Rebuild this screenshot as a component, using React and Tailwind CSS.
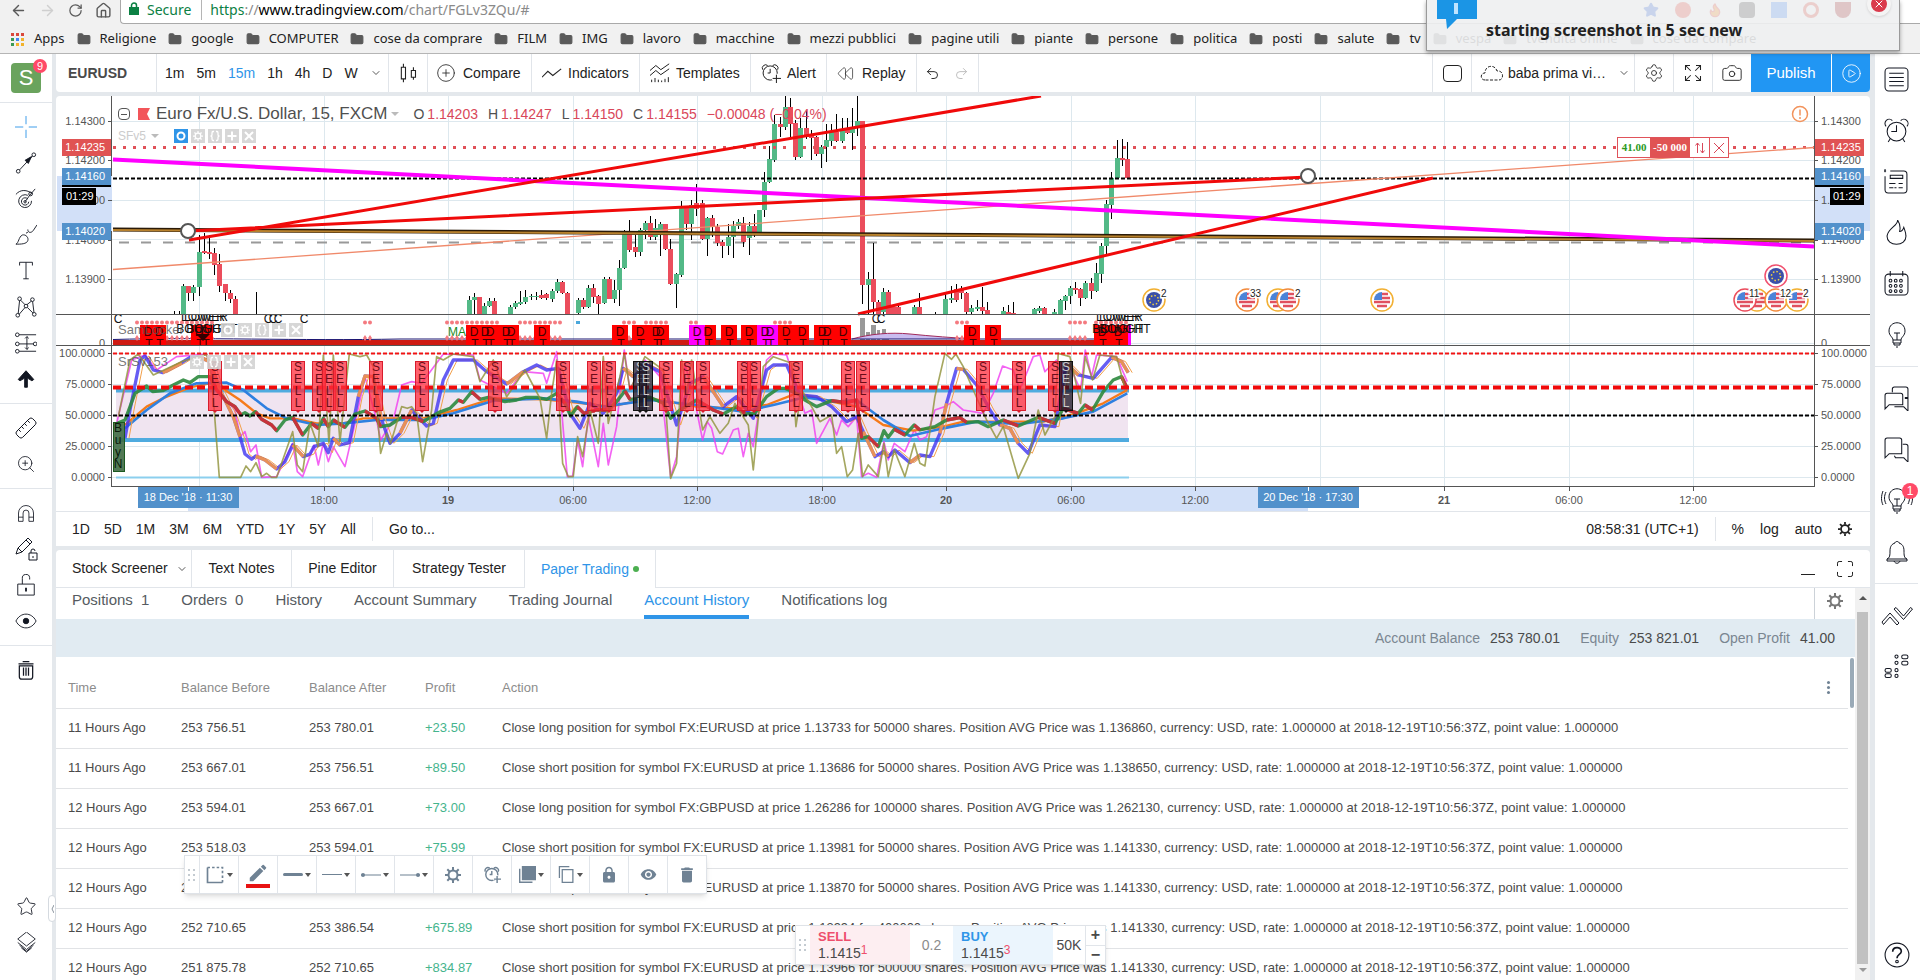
import {
  ArrowLeft,
  ArrowRight,
  Camera,
  ChevronDown,
  CirclePlay,
  CirclePlus,
  Flame,
  Folder,
  Home,
  Maximize,
  Redo2,
  Rewind,
  RotateCw,
  Ruler,
  Settings,
  Star,
  Undo2,
  X,
  ZoomIn,
} from "lucide-react";
import { MdDelete, MdEdit, MdLock, MdVisibility } from "react-icons/md";

const BOOKMARKS = [
  "Religione", "google", "COMPUTER", "cose da comprare", "FILM", "IMG", "lavoro", "macchine",
  "mezzi pubblici", "pagine utili", "piante", "persone", "politica", "posti", "salute", "tv",
  "vespa", "tvendita online", "cose da compare",
];

const INTERVALS = ["1m", "5m", "15m", "1h", "4h", "D", "W"];
const RANGES = ["1D", "5D", "1M", "3M", "6M", "YTD", "1Y", "5Y", "All"];

const PANEL_TABS = [
  { label: "Stock Screener", width: "w-[136px] pl-4", menu: true },
  { label: "Text Notes", width: "w-[100px] justify-center" },
  { label: "Pine Editor", width: "w-[102px] justify-center" },
  { label: "Strategy Tester", width: "w-[131px] justify-center" },
];

const ACCOUNT_TABS = [
  { label: "Positions", count: 1 },
  { label: "Orders", count: 0 },
  { label: "History" },
  { label: "Account Summary" },
  { label: "Trading Journal" },
  { label: "Account History", active: true },
  { label: "Notifications log" },
];

const deal = (side, symbol, price, shares, avg) =>
  `Close ${side} position for symbol FX:${symbol} at price ${price} for ${shares} shares. Position AVG Price was ${avg}, currency: USD, rate: 1.000000 at 2018-12-19T10:56:37Z, point value: 1.000000`;

const HISTORY = [
  ["11 Hours Ago", "253 756.51", "253 780.01", "+23.50", deal("long", "EURUSD", "1.13733", "50000", "1.136860")],
  ["11 Hours Ago", "253 667.01", "253 756.51", "+89.50", deal("short", "EURUSD", "1.13686", "50000", "1.138650")],
  ["12 Hours Ago", "253 594.01", "253 667.01", "+73.00", deal("long", "GBPUSD", "1.26286", "100000", "1.262130")],
  ["12 Hours Ago", "253 518.03", "253 594.01", "+75.99", deal("short", "EURUSD", "1.13981", "50000", "1.141330")],
  ["12 Hours Ago", "253 386.54", "253 518.03", "+131.49", deal("short", "EURUSD", "1.13870", "50000", "1.141330")],
  ["12 Hours Ago", "252 710.65", "253 386.54", "+675.89", deal("short", "EURUSD", "1.13994", "400000", "1.141330")],
  ["12 Hours Ago", "251 875.78", "252 710.65", "+834.87", deal("short", "EURUSD", "1.13966", "500000", "1.141330")],
];

/* ---------- chart data ---------- */

// direction, x, body top, body bottom, wick top, wick bottom
const CANDLES = [
  ["u", 183, 286, 314, 284, 314], ["d", 188, 286, 293, 286, 301], ["u", 193, 287, 293, 285, 301],
  ["u", 199, 252, 287, 235, 296], ["d", 204, 251, 253, 233, 254], ["d", 209, 252, 254, 235, 259],
  ["d", 214, 253, 265, 248, 275], ["d", 219, 264, 286, 254, 292], ["d", 225, 284, 293, 284, 301],
  ["d", 230, 293, 299, 290, 303], ["d", 235, 299, 314, 296, 314], ["u", 469, 300, 314, 296, 314],
  ["u", 474, 297, 300, 293, 314], ["d", 479, 297, 314, 297, 314], ["u", 484, 306, 314, 303, 314],
  ["u", 489, 301, 306, 298, 307], ["d", 494, 301, 314, 298, 314], ["u", 510, 307, 314, 305, 314],
  ["u", 515, 303, 307, 301, 309], ["u", 520, 302, 304, 291, 305], ["u", 525, 297, 302, 290, 304],
  ["u", 531, 296, 297, 294, 300], ["u", 536, 296, 297, 292, 300], ["d", 541, 295, 298, 290, 299],
  ["d", 546, 294, 298, 293, 300], ["u", 552, 291, 299, 289, 302], ["u", 557, 282, 291, 279, 293],
  ["d", 562, 282, 293, 281, 294], ["d", 567, 293, 314, 292, 314], ["u", 578, 300, 313, 298, 314],
  ["d", 583, 300, 307, 298, 309], ["u", 588, 288, 307, 285, 308], ["d", 593, 288, 297, 284, 303],
  ["d", 598, 296, 304, 295, 314], ["u", 604, 279, 303, 277, 304], ["d", 609, 279, 299, 277, 299],
  ["u", 614, 290, 299, 280, 303], ["u", 619, 268, 290, 260, 306], ["u", 624, 232, 268, 230, 269],
  ["d", 629, 232, 250, 220, 252], ["d", 635, 247, 252, 235, 257], ["u", 640, 230, 252, 228, 256],
  ["u", 645, 223, 230, 221, 239], ["d", 650, 223, 237, 216, 240], ["u", 655, 228, 237, 219, 240],
  ["u", 660, 224, 232, 222, 256], ["d", 665, 224, 249, 224, 250], ["d", 670, 249, 284, 239, 285],
  ["u", 676, 274, 284, 273, 308], ["u", 681, 207, 275, 201, 277], ["d", 686, 207, 224, 206, 230],
  ["u", 691, 205, 224, 200, 240], ["d", 696, 203, 209, 184, 216], ["d", 702, 203, 239, 200, 240],
  ["u", 707, 218, 239, 217, 256], ["d", 712, 218, 227, 215, 237], ["d", 717, 227, 243, 224, 246],
  ["d", 722, 242, 246, 240, 258], ["u", 728, 237, 246, 224, 255], ["u", 733, 226, 237, 221, 258],
  ["u", 738, 222, 226, 219, 229], ["d", 743, 223, 242, 217, 247], ["u", 749, 226, 238, 222, 255],
  ["d", 754, 226, 234, 214, 237], ["u", 759, 210, 234, 210, 235], ["u", 764, 182, 210, 172, 217],
  ["u", 769, 159, 182, 146, 183], ["u", 774, 124, 160, 115, 162], ["d", 780, 124, 127, 117, 137],
  ["u", 785, 107, 127, 96, 130], ["d", 790, 107, 124, 98, 137], ["d", 795, 123, 157, 120, 160],
  ["u", 800, 128, 157, 118, 158], ["d", 806, 128, 137, 110, 139], ["d", 811, 136, 138, 130, 160],
  ["d", 816, 137, 154, 136, 156], ["u", 821, 147, 154, 145, 168], ["u", 826, 140, 147, 124, 162],
  ["u", 831, 132, 141, 124, 146], ["d", 836, 132, 141, 114, 142], ["u", 842, 129, 141, 118, 143],
  ["d", 847, 129, 133, 118, 134], ["u", 852, 127, 133, 108, 150], ["u", 857, 121, 127, 96, 136],
  ["d", 862, 121, 285, 121, 304], ["u", 868, 279, 285, 272, 314], ["d", 873, 279, 302, 243, 314],
  ["d", 878, 302, 314, 300, 314], ["u", 883, 292, 312, 288, 314], ["d", 888, 292, 314, 290, 314],
  ["d", 893, 307, 314, 305, 314], ["d", 898, 307, 314, 305, 314], ["u", 914, 307, 314, 305, 314],
  ["d", 919, 307, 314, 293, 314], ["u", 945, 299, 314, 294, 314], ["u", 951, 298, 300, 286, 303],
  ["d", 956, 289, 300, 284, 302], ["d", 961, 289, 293, 286, 299], ["d", 966, 293, 312, 292, 314],
  ["u", 971, 308, 312, 305, 314], ["u", 977, 307, 309, 300, 311], ["d", 982, 307, 311, 287, 314],
  ["d", 987, 310, 314, 302, 314], ["u", 1003, 311, 314, 307, 314], ["d", 1008, 312, 314, 305, 314],
  ["d", 1013, 313, 314, 302, 314], ["u", 1034, 309, 314, 308, 314], ["u", 1039, 308, 311, 306, 313],
  ["d", 1044, 308, 314, 307, 314], ["u", 1054, 312, 314, 309, 314], ["u", 1060, 300, 314, 299, 314],
  ["u", 1065, 296, 301, 295, 310], ["u", 1070, 288, 296, 286, 304], ["d", 1075, 288, 290, 282, 294],
  ["d", 1080, 289, 298, 288, 306], ["u", 1085, 283, 298, 281, 299], ["d", 1091, 283, 291, 278, 299],
  ["u", 1096, 273, 291, 263, 292], ["u", 1101, 246, 274, 243, 283], ["u", 1106, 204, 246, 200, 256],
  ["u", 1111, 178, 205, 172, 219], ["u", 1117, 158, 178, 140, 178], ["d", 1122, 158, 160, 139, 166],
  ["d", 1127, 159, 178, 142, 179],
];

const GRID_X = [199, 324, 448, 573, 697, 822, 946, 1071, 1195, 1320, 1444, 1569, 1693];
const GRID_Y = [121, 160, 200, 239, 279, 343, 353, 384, 415, 446, 477];

const TIME_LABELS = [
  [324, "18:00"], [448, "19"], [573, "06:00"], [697, "12:00"], [822, "18:00"], [946, "20"],
  [1071, "06:00"], [1195, "12:00"], [1444, "21"], [1569, "06:00"], [1693, "12:00"],
];

const PRICE_LABELS = [
  [121, "1.14300"], [160, "1.14200"], [200, "1.14100"], [240, "1.14000"], [279, "1.13900"],
  [353, "100.0000"], [384, "75.0000"], [415, "50.0000"], [446, "25.0000"], [477, "0.0000"],
];

const SELLS = [215, 298, 319, 329, 340, 376, 422, 495, 563, 594, 609, 666, 687, 703, 744, 754, 796, 848, 863, 983, 1019, 1055];
const DARK_SELLS = [640, 646, 1066];

const D_BOXES = [
  [140, 26, "#f00"], [191, 22, "#f00"], [466, 53, "#f00"], [534, 16, "#f00"], [612, 16, "#f00"],
  [632, 37, "#f00"], [689, 16, "#f0f"], [705, 11, "#f00"], [721, 16, "#f00"], [741, 16, "#f00"],
  [757, 21, "#f0f"], [778, 31, "#f00"], [814, 37, "#f00"], [964, 16, "#f00"], [985, 16, "#f00"],
  [1094, 34, "#f00"], [1128, 3, "#f0f"],
];
const D_MARKS = [
  148, 159, 199, 205, 474, 485, 490, 506, 511, 542, 620, 640, 656, 660, 697, 708, 729, 749, 765, 770,
  786, 802, 822, 827, 843, 972, 993, 1102, 1118,
];
// runs of alert dots: first x, last x
const DOT_RUNS = [
  [137, 214], [365, 371], [447, 500], [520, 563], [624, 636], [646, 667], [691, 697], [775, 791], [957, 967], [1070, 1086], [1096, 1130],
];

// oscillator series, drawn on a grid of thirds of a pixel
const FAST =
  "22,340 45,330 75,250 110,228 128,245 158,242 190,225 220,210 240,218 265,200 300,200 320,240 350,275 375,290 393,315 405,308 420,318 437,305 455,328 485,345 500,362 525,330 548,322 578,375 605,340 625,355 640,325 655,350 670,330 705,352 735,312 765,303 800,325 812,350 840,345 875,322 905,322 940,335 985,308 1020,295 1045,270 1060,277 1085,245 1110,268 1135,262 1185,275 1220,270 1248,262 1280,262 1310,268 1340,250 1365,280 1382,318 1402,290 1422,310 1460,300 1495,300 1520,275 1545,243 1560,268 1620,262 1660,280 1682,325 1710,300 1760,270 1810,300 1840,312 1880,290 1905,312 1935,310 1970,260 2005,235 2025,235 2070,255 2085,270 2120,290 2165,272 2210,278 2240,270 2255,385 2275,380 2305,410 2322,362 2335,382 2353,358 2385,375 2413,345 2430,360 2475,350 2510,330 2550,323 2570,337 2605,335 2635,350 2680,330 2725,348 2785,322 2835,340 2860,295 2905,310 2925,285 2948,300 2980,245 3010,210 3035,200 3052,235";
const FAST_FALLS = [
  "300,200 320,240 350,275 375,290 393,315",
  "437,305 455,328 485,345 500,362",
  "548,322 578,375",
  "605,340 625,355",
  "640,325 655,350",
  "670,330 705,352",
  "765,303 800,325 812,350",
  "875,322 905,322 940,335",
  "1045,270 1060,277",
  "1085,245 1110,268",
  "1340,250 1365,280",
  "1402,290 1422,310 1460,300 1495,300",
  "1545,243 1560,268",
  "1760,270 1810,300 1840,312",
  "1880,290 1905,312",
  "2165,272 2210,278 2240,270 2255,385",
  "2275,380 2305,410",
  "2353,358 2385,375",
  "2413,345 2430,360",
  "2510,330 2550,323 2570,337",
  "2680,330 2725,348",
  "2785,322 2835,340",
  "2860,295 2905,310",
  "2925,285 2948,300",
  "3035,200 3052,235",
];
const WAVE =
  "45,385 60,300 90,150 105,138 130,180 158,188 215,158 240,142 265,140 300,155 330,240 370,320 390,380 405,432 425,448 437,438 465,450 500,477 525,455 548,405 580,440 600,432 612,410 640,400 655,428 670,385 690,405 718,398 745,260 765,198 790,200 815,330 840,400 870,370 905,300 950,348 970,340 1000,210 1030,150 1090,150 1130,185 1190,222 1240,185 1280,165 1310,180 1345,175 1380,310 1410,355 1440,280 1480,310 1520,250 1540,175 1570,200 1610,165 1650,185 1700,345 1740,220 1780,200 1840,290 1880,260 1930,325 1970,180 1990,165 2030,165 2070,255 2120,260 2165,290 2210,335 2240,320 2260,365 2295,440 2320,425 2335,440 2355,420 2400,458 2430,435 2460,440 2490,370 2510,280 2540,175 2560,178 2600,225 2640,300 2670,345 2700,355 2725,400 2755,430 2790,345 2835,350 2870,160 2905,195 2950,205 3005,142 3035,155 3055,188";
const WAVE_TURNS = [
  "158,188 215,158",
  "265,140 300,155 330,240 370,320 390,380",
  "437,438 465,450 500,477",
  "548,405 580,440",
  "670,385 690,405",
  "745,260 765,198 790,200 815,330",
  "870,370 905,300",
  "1190,222 1240,185",
  "1380,310 1402,290",
  "1540,175 1570,200",
  "1780,200 1840,290",
  "2260,365 2295,440",
  "2320,425 2335,440",
  "2400,458 2430,435",
  "2490,370 2510,280",
  "2540,175 2560,178",
  "2670,345 2700,355 2725,400",
  "2870,160 2905,195",
  "3005,142 3035,155 3055,188",
];
const OLIVE =
  "25,320 60,150 85,132 130,195 215,155 290,132 305,200 328,502 392,502 408,468 422,485 438,458 455,500 470,490 485,502 500,502 548,365 562,465 578,485 600,340 625,410 640,135 657,400 670,135 690,395 718,132 750,140 770,135 790,170 812,430 830,370 842,400 875,290 892,295 905,290 920,310 938,455 965,300 980,140 1000,150 1030,132 1090,140 1110,215 1150,150 1190,260 1245,180 1290,265 1310,385 1325,250 1340,150 1358,460 1375,500 1390,500 1403,380 1418,440 1440,300 1465,400 1480,140 1495,340 1530,200 1543,130 1560,240 1605,140 1660,180 1682,505 1700,460 1715,150 1730,250 1745,150 1778,360 1800,320 1830,370 1855,340 1875,280 1915,345 1930,480 1960,170 1990,140 2045,160 2058,350 2075,240 2105,290 2130,335 2165,315 2180,430 2195,410 2212,500 2228,480 2245,370 2258,500 2275,465 2305,500 2322,400 2335,500 2353,420 2385,500 2413,400 2430,460 2445,468 2475,260 2505,130 2525,148 2538,132 2560,170 2590,240 2630,330 2660,385 2680,350 2725,505 2760,430 2785,300 2805,375 2835,320 2845,130 2880,140 2912,280 2926,140 2948,210 2970,135 3020,140 3045,235";
const PINK =
  "20,340 65,150 105,135 140,180 200,140 290,132 320,240 375,300 390,380 405,365 422,425 438,405 455,502 500,500 548,400 562,485 578,500 612,405 625,465 640,400 655,455 670,410 705,470 735,340 765,200 800,330 812,390 850,330 875,225 905,215 935,220 1000,132 1090,135 1110,210 1190,250 1240,185 1300,190 1310,220 1340,125 1372,500 1388,498 1403,390 1418,470 1435,320 1465,470 1480,340 1495,465 1520,350 1543,120 1560,240 1605,150 1650,200 1682,500 1700,440 1725,160 1760,300 1778,390 1792,335 1805,355 1822,425 1838,432 1870,360 1885,355 1900,440 1915,370 1930,410 1970,150 1990,132 2030,135 2060,230 2085,310 2105,300 2120,400 2160,325 2180,375 2195,330 2215,350 2240,320 2255,500 2275,490 2300,502 2322,395 2335,450 2353,400 2385,425 2413,360 2430,390 2450,380 2475,300 2505,290 2530,275 2560,300 2620,310 2650,250 2678,168 2710,180 2730,240 2770,140 2790,135 2805,185 2840,150 2860,190 2880,170 2912,240 2926,120 2945,200 2960,135 3020,140 3052,215";
const SLOW_ORANGE =
  "45,345 110,290 165,262 240,232 300,220 330,230 390,270 440,310 480,325 550,325 620,340 700,340 760,325 850,325 940,325 1040,300 1150,265 1300,268 1400,278 1500,290 1620,265 1760,290 1880,295 1970,285 2060,250 2165,275 2240,290 2320,345 2410,362 2500,350 2560,335 2680,335 2800,335 2900,310 2980,280 3052,240";
const SLOW_BLUE =
  "45,355 110,300 180,250 260,220 350,218 400,240 470,295 530,325 620,345 700,340 800,330 940,330 1030,310 1150,272 1300,265 1400,275 1480,290 1620,270 1760,285 1900,305 1990,285 2085,262 2180,275 2240,270 2320,330 2400,378 2500,355 2600,335 2730,342 2860,325 2950,305 3052,250";

/* ---------- small drawings ---------- */

function Line({ size = 24, w = 1, children, className }) {
  return (
    <svg
      width={size}
      height={size}
      viewBox="0 0 24 24"
      fill="none"
      stroke="currentColor"
      strokeWidth={w}
      className={className}
      aria-hidden="true"
    >
      {children}
    </svg>
  );
}

function Gear({ size = 14, className }) {
  return (
    <svg width={size} height={size} viewBox="0 0 16 16" fill="none" stroke="currentColor" className={className} aria-hidden="true">
      <circle cx="8" cy="8" r="4.5" strokeWidth="2" />
      <path d="M8 0v3M8 13v3M0 8h3M13 8h3M2.3 2.3l2.2 2.2M11.5 11.5l2.2 2.2M2.3 13.7l2.2-2.2M11.5 4.5l2.2-2.2" strokeWidth="2" />
    </svg>
  );
}

function AlarmPlus({ size = 24, w = 1 }) {
  return (
    <Line size={size} w={w}>
      <circle cx="11" cy="12" r="8.5" />
      <path d="M11 7v5H8M2 8a4 4 0 0 1 6-5M14 3a4 4 0 0 1 6 5" />
      <path d="M18.500 13v11M13 18.500h11" stroke="#fff" strokeWidth="4" />
      <path d="M18.500 14v10M14 18.500h10" />
    </Line>
  );
}

const DRAW_TOOLS = [
  { label: "Cross", blue: true, art: <path d="M12 0v9M12 15v9M0 12h9M15 12h9" /> },
  { label: "Trend Line", art: <><circle cx="3.500" cy="21" r="2" /><circle cx="20.500" cy="3" r="2" /><path d="M5 19.500 19 4.500" /><path d="m18 5-7 4 3.500 3.500z" fill="currentColor" /></> },
  { label: "Gann and Fibonacci", art: <><path d="M14 8a7 7 0 1 0 4 6M14 12a4 4 0 1 0 1 3M1 7c5-6 12-5 18-1M11 15l5-7 6-7" /><circle cx="11" cy="15" r="1.300" /><circle cx="17" cy="6.500" r="2" /></> },
  { label: "Brush", art: <path d="M1 22c3-1 3-8 7-10 4-1 7 3 6 6-1 4-8 4-13 4zM14 6c0 4 4 4 6 1l4-6M12 10l2-1" /> },
  { label: "Text", art: <path d="M5 6V2.500h14V6M12 2.500v18M9 20.500h6" /> },
  { label: "Patterns", art: <><circle cx="5" cy="3" r="2" /><circle cx="3" cy="21" r="2" /><circle cx="12" cy="11" r="2" /><circle cx="19" cy="4" r="2" /><circle cx="21" cy="20" r="2" /><path d="M5 5 3.500 19M4.500 20 11 12.500M6 4.500l5 5M13 9.500l5-4M13.500 12.500l6 6M19.200 6l1.500 12" /></> },
  { label: "Prediction", art: <><circle cx="2.500" cy="3" r="2" /><circle cx="2.500" cy="13" r="2" /><circle cx="22" cy="13" r="2" /><circle cx="2.500" cy="21" r="2" /><path d="M4.500 3H23M4.500 13H20M4.500 21H23M13 5v14M11 7l2-2 2 2M11 17l2 2 2-2" /></> },
  { label: "Icon", art: <path d="M12 3 3.500 12.500l2 1.500L10.500 11v10h3V11l5 3 2-1.500z" fill="currentColor" /> },
];

function SideButton({ label, children, tall }) {
  return (
    <button
      aria-label={label}
      className={`relative flex w-full shrink-0 items-center justify-center text-[#131722] ${tall ? "h-[51px]" : "h-9"}`}
    >
      {children}
    </button>
  );
}

function Rule() {
  return <hr className="my-1.5 w-full shrink-0 border-t border-[#e1e5ea]" />;
}

/* ---------- browser chrome ---------- */

function BrowserBar() {
  return (
    <div className="relative h-[54px] shrink-0 overflow-hidden border-b border-[#b5b5b5] bg-[#f1f1f1] font-['Noto_Sans',sans-serif]">
      <div className="flex h-6 items-start">
        <div className="flex w-[120px] shrink-0 items-center gap-3 pl-2.5 text-[#5a5a5a]">
          <button aria-label="Back"><ArrowLeft size={17} className="mt-0.5" /></button>
          <button aria-label="Forward"><ArrowRight size={17} className="mt-0.5 text-[#cfcfcf]" /></button>
          <button aria-label="Reload"><RotateCw size={15} className="mt-0.5" /></button>
          <button aria-label="Home"><Home size={17} className="mt-0.5" /></button>
        </div>
        <div className="flex h-6 flex-1 items-start rounded-bl border-b border-l border-[#a9a9a9] bg-white pl-2 text-[14px] leading-5">
          <svg width="10" height="14" viewBox="0 0 10 14" className="mt-0.5" fill="#0b8043" aria-hidden="true">
            <path d="M0 5h10v8H0z" />
            <path d="M2.500 6V3.500a2.500 2.500 0 0 1 5 0V6" fill="none" stroke="#0b8043" strokeWidth="1.500" />
          </svg>
          <span className="ml-2 text-[#0b8043]">Secure</span>
          <span className="ml-2.5 mr-2 h-5 w-px bg-[#b5b5b5]" />
          <a href="#" className="text-[#8a8a8a]">
            <span className="text-[#0b8043]">https</span>://<span className="text-black">www.tradingview.com</span>/chart/FGLv3ZQu/#
          </a>
        </div>
      </div>
      <nav className="flex h-[30px] items-center whitespace-nowrap pl-[11px] text-[13px] text-[#222]">
        <a href="#" className="mr-3 flex items-center gap-2.5">
          <svg width="13" height="13" viewBox="0 0 13 13" aria-hidden="true">
            {["#d9483b", "#d9483b", "#d9483b", "#3a9a55", "#4285f4", "#f2b32c", "#3a9a55", "#f2b32c", "#f2b32c"].map((c, i) => (
              <rect key={i} x={(i % 3) * 5} y={Math.floor(i / 3) * 5} width="3" height="3" fill={c} />
            ))}
          </svg>
          Apps
        </a>
        {BOOKMARKS.map((name) => (
          <a key={name} href="#" className="mr-3 flex items-center gap-[9px]">
            <Folder size={14} fill="#5a5a5a" className="text-[#5a5a5a]" />
            {name}
          </a>
        ))}
      </nav>
    </div>
  );
}

function Notification() {
  return (
    <div
      role="status"
      className="absolute right-5 top-0 z-20 h-[51px] w-[474px] border border-t-0 border-[#9a9a9a] bg-[#eef0f1]/90 shadow-[0_2px_4px_rgba(0,0,0,0.35)]"
    >
      <svg width="40" height="30" viewBox="0 0 40 30" className="absolute left-2.5 top-0" aria-hidden="true">
        <path d="M0 0h40v19H20L10 29 9 19H0z" fill="#1b95e5" />
        <path d="M19 3v11" stroke="#bfe4ff" strokeWidth="4" />
      </svg>
      <div className="absolute right-12 top-0.5 flex gap-4 opacity-20">
        <Star size={16} fill="#3367d6" className="text-[#3367d6]" />
        <span className="h-4 w-4 rounded-full bg-[#e4483b]" />
        <Flame size={16} fill="#f28b1c" className="text-[#e4483b]" />
        <span className="h-4 w-4 rounded bg-[#444]" />
        <span className="h-4 w-4 bg-[#4285f4]" />
        <span className="h-4 w-4 rounded-full border-3 border-[#d9483b]" />
        <span className="h-4 w-4 rounded-b-full bg-[#a02020]" />
      </div>
      <button
        aria-label="Close"
        className="absolute -top-2 right-2 flex h-6 w-6 items-center justify-center rounded-full border-4 border-[#f4f4f4] bg-[#da3a4c] text-white shadow"
      >
        <X size={12} />
      </button>
      <p className="pl-[59px] pt-[18px] font-['Noto_Sans',sans-serif] text-[16px] font-bold leading-6 text-[#222]">
        starting screenshot in 5 sec new
      </p>
    </div>
  );
}

/* ---------- side toolbars ---------- */

function LeftToolbar() {
  return (
    <aside className="relative mr-1 flex w-[52px] shrink-0 flex-col items-center bg-white">
      <div className="flex h-[49px] w-full shrink-0 items-start justify-center border-b border-[#e1e5ea] pt-[9px]">
        <button className="relative h-[30px] w-[30px] rounded-sm bg-[#6aa35d] text-[22px] leading-[30px] text-white">
          S
          <span className="absolute -right-1.5 -top-1 flex h-3.5 w-3.5 items-center justify-center rounded-full bg-[#ff4a68] text-[11px] leading-none">9</span>
        </button>
      </div>
      <div className="h-1.5 shrink-0" />
      {DRAW_TOOLS.map((t) => (
        <SideButton key={t.label} label={t.label}>
          <Line size={22} className={t.blue ? "text-[#2f95e8]" : ""}>{t.art}</Line>
        </SideButton>
      ))}
      <Rule />
      <SideButton label="Measure"><Ruler size={24} strokeWidth={1} className="-scale-x-100" /></SideButton>
      <SideButton label="Zoom In"><ZoomIn size={20} strokeWidth={1} /></SideButton>
      <Rule />
      <SideButton label="Magnet Mode">
        <Line size={20}>
          <path d="M3 22V12a9 9 0 0 1 18 0v10h-5.500V12a3.500 3.500 0 0 0-7 0v10zM3 17h5.500M15.500 17H21" />
        </Line>
      </SideButton>
      <SideButton label="Stay in Drawing Mode">
        <Line size={24}>
          <path d="m2 17 2-6L14 1l4 4L8 15zM12 3l4 4M4 11l4 4M15 16h8v7h-8zM17 16v-2a2 2 0 0 1 4 0M19 19v2" />
        </Line>
      </SideButton>
      <SideButton label="Lock All Drawing Tools">
        <Line size={22}>
          <path d="M3 11h18v12H3zM8 11V5a4 4 0 0 1 8-1v2" />
          <path d="M12 15v4" strokeWidth="2" />
        </Line>
      </SideButton>
      <SideButton label="Hide All Drawings">
        <Line size={22}>
          <path d="M1 12c5-10 17-10 22 0-5 10-17 10-22 0z" />
          <circle cx="12" cy="12" r="3" fill="currentColor" />
        </Line>
      </SideButton>
      <Rule />
      <SideButton label="Remove Drawings">
        <Line size={20} w={1.500}>
          <path d="M3 4.500h18M8 2h8M4 7v13a3 3 0 0 0 3 3h10a3 3 0 0 0 3-3V7zM9 9v10M12 9v10M15 9v10" />
        </Line>
      </SideButton>
      <div className="flex-1" />
      <SideButton label="Favorites"><Star size={21} strokeWidth={1} /></SideButton>
      <SideButton label="Object Tree">
        <Line size={21}>
          <path d="m12 0 10 8-10 8L2 8zM2 12l10 8 10-8M4 15l8 7 8-7M6 18l6 5 6-5" />
        </Line>
      </SideButton>
      <div className="h-5 shrink-0" />
      <button
        aria-label="Collapse toolbar"
        className="absolute -right-1 bottom-[58px] flex h-[27px] w-2 items-center justify-center rounded border border-[#d5dae0] bg-white text-[#8a949e]"
      >
        <svg width="3" height="8" viewBox="0 0 3 8" fill="none" stroke="currentColor" aria-hidden="true"><path d="M3 0 1 4l2 4" /></svg>
      </button>
    </aside>
  );
}

function RightToolbar() {
  return (
    <aside className="ml-[5px] flex w-[45px] shrink-0 flex-col items-center bg-white pr-0.5">
      <SideButton tall label="Watchlist">
        <Line size={25}>
          <rect x="1" y="1" width="22" height="22" rx="3.500" />
          <path d="M5 6h14M5 10h14M5 14h14M5 18h14" />
        </Line>
      </SideButton>
      <SideButton tall label="Alerts">
        <Line size={25}>
          <circle cx="12" cy="13" r="9" />
          <path d="M12 7v6H7M2 8a4 4 0 0 1 6-5.500M16 2.500A4 4 0 0 1 22 8M6 20l-2 3M18 20l2 3" />
        </Line>
      </SideButton>
      <SideButton tall label="News">
        <Line size={25}>
          <path d="M1 7v13a3 3 0 0 0 3 3h15a3 3 0 0 0 3-3V5a3 3 0 0 0-3-3H6M1 0v3M-1 2h3M6 6h12v3H6zM5 14h6M5 18h4M14 14h4M14 18h4M10 18h2" />
        </Line>
      </SideButton>
      <SideButton tall label="Hotlist">
        <Line size={25}>
          <path d="M13 0c1 5-9 8-10 15-1 11 19 11 18 0 0-3-1-5-2-8-1 3-3 4-4 4 1-4 0-8-2-11z" />
        </Line>
      </SideButton>
      <SideButton tall label="Calendar">
        <Line size={25}>
          <rect x="1" y="3" width="22" height="20" rx="3.500" />
          <path d="M6 0v5M18 0v5" />
          {[8, 13, 18].map((y) => [5, 10, 15].map((x) => <rect key={`${x}${y}`} x={x} y={y} width="2.500" height="2.500" rx="1" />))}
        </Line>
      </SideButton>
      <SideButton tall label="My Ideas"><Bulb /></SideButton>
      <Rule />
      <SideButton tall label="Public Chats">
        <Line size={25}>
          <path d="M8 6V3a2 2 0 0 1 2-2h11a2 2 0 0 1 2 2v8h-3M1 22V9a2 2 0 0 1 2-2h13a2 2 0 0 1 2 2v9H5zM20 12h3v12l-4-4h-9" />
        </Line>
      </SideButton>
      <SideButton tall label="Private Chats">
        <Line size={25}>
          <path d="M1 20V3a2 2 0 0 1 2-2h12a2 2 0 0 1 2 2v13H5zM18 7h3a2 2 0 0 1 2 2v15l-4-4h-8l-1-2" />
        </Line>
      </SideButton>
      <SideButton tall label="Ideas Stream">
        <Bulb waves />
        <span className="absolute right-0 top-2 flex h-4 w-4 items-center justify-center rounded-full bg-[#ff4a68] text-[12px] text-white">1</span>
      </SideButton>
      <SideButton tall label="Notifications">
        <Line size={24}>
          <path d="M2 19c3-1 3-4 3-8 0-5 2-7 5-8 0-2 4-2 4 0 3 1 5 3 5 8 0 4 0 7 3 8zM2 19v2h20v-2M9 21c1 3 5 3 6 0" />
        </Line>
      </SideButton>
      <Rule />
      <SideButton tall label="Order Panel">
        <svg width="32" height="18" viewBox="0 0 32 18" fill="none" stroke="currentColor" aria-hidden="true">
          <path d="M1 15 9 6l9 10-2 2-7-8-6.500 7.500zM13 2l2-1.500L22.500 9 29.500.5l2 1.500-9 10.500z" />
        </svg>
      </SideButton>
      <SideButton tall label="DOM">
        <Line size={25}>
          {[1, 7].map((y) => <rect key={y} x="17" y={y} width="6" height="3.500" rx="1.700" />)}
          {[14, 19].map((y) => <rect key={y} x="1" y={y} width="6" height="3.500" rx="1.700" />)}
          {[2.500, 8.500, 15.500, 21].map((y) => <circle key={y} cx="12" cy={y} r="1.500" />)}
        </Line>
      </SideButton>
      <div className="flex-1" />
      <SideButton tall label="Help">
        <Line size={26}>
          <circle cx="12" cy="12" r="11" />
          <path d="M8 9c0-5 8-5 8-.5 0 3-4 3-4 6.500" strokeWidth="1.500" />
          <circle cx="12" cy="18" r="1.200" />
        </Line>
      </SideButton>
    </aside>
  );
}

function Bulb({ waves }) {
  return (
    <svg width="32" height="26" viewBox="-4 0 32 26" fill="none" stroke="currentColor" aria-hidden="true">
      <path d="M8 18c0-3-4-4-4-9 0-11 16-11 16 0 0 5-4 6-4 9zM9 11h6M12 11v7M8 21h8M9 21v2h6v-2M11 25h2M8 18v3M16 18v3" />
      {waves && <path d="M1 4c-2 4-2 8 0 12M-2 3c-2 5-2 10 0 14M23 4c2 4 2 8 0 12M26 3c2 5 2 10 0 14" />}
    </svg>
  );
}

/* ---------- chart header ---------- */

const cell = "flex h-full items-center border-r border-[#e1e5ea]";

function ChartHeader() {
  return (
    <header className="mb-1 flex h-[38px] shrink-0 items-center whitespace-nowrap rounded-b bg-white text-[14px] text-[#222]">
      <button className={`${cell} w-[101px] pl-3 font-bold text-[#4a4a4a]`}>EURUSD</button>
      <div className={`${cell} w-[232px] gap-3 pl-2`}>
        {INTERVALS.map((i) => (
          <button key={i} className={i === "15m" ? "text-[#2f95e8]" : ""}>{i}</button>
        ))}
        <button aria-label="More intervals"><ChevronDown size={12} strokeWidth={1.500} /></button>
      </div>
      <button aria-label="Bar style" className={`${cell} w-[39px] justify-center`}>
        <Line size={20} w={1.300}>
          <path d="M4 5h5v14H4zM6.500 1v4M6.500 19v4M16 9h5v8h-5zM18.500 5v4M18.500 17v3" />
        </Line>
      </button>
      <button className={`${cell} w-[104px] gap-[7px] pl-2`}><CirclePlus size={20} strokeWidth={1} />Compare</button>
      <button className={`${cell} w-[108px] gap-1.5 pl-2.5`}>
        <Line size={20} w={1.300}><path d="M0 17 7 10l6 5L23 7" /></Line>Indicators
      </button>
      <button className={`${cell} w-[111px] gap-1.5 pl-2.5`}>
        <Line size={20} w={1.200}>
          <path d="M0 9 7 3l6 5L23 1M0 15l7-6 6 5 10-7M2 23v-3M6 23v-5M10 23v-3M14 23v-2M18 23v-4M22 23v-6" />
        </Line>
        Templates
      </button>
      <button className={`${cell} w-[76px] gap-1.5 pl-2.5`}><AlarmPlus size={20} w={1.200} />Alert</button>
      <button className={`${cell} w-[90px] gap-2 pl-2.5`}><Rewind size={17} strokeWidth={1} />Replay</button>
      <div className={`${cell} w-[62px] gap-3.5 pl-2`}>
        <button aria-label="Undo"><Undo2 size={15} strokeWidth={1.500} /></button>
        <button aria-label="Redo" className="text-[#bbb]"><Redo2 size={15} strokeWidth={1.500} /></button>
      </div>
      <div className="h-full flex-1 border-r border-[#e1e5ea]" />
      <button aria-label="Layout" className={`${cell} w-[39px] justify-center`}>
        <span className="h-[17px] w-[19px] rounded-sm border border-[#222]" />
      </button>
      <button className={`${cell} w-[163px] pl-2`}>
        <Line size={24} w={1}><path d="M5 19c-5 0-5-7 0-7 0-8 10-9 12-2 7-1 7 9 2 9z" strokeDasharray="3 1.500" /></Line>
        <span className="ml-1 w-[110px] text-left">baba prima vi…</span>
        <ChevronDown size={12} strokeWidth={1.500} />
      </button>
      <button aria-label="Chart properties" className={`${cell} w-[39px] justify-center`}><Settings size={20} strokeWidth={1} /></button>
      <button aria-label="Fullscreen" className={`${cell} w-[39px] justify-center`}>
        <Line size={18} w={1.400}>
          <path d="M2 8V2h6M2 2l7 7M16 2h6v6M22 2l-7 7M2 16v6h6M2 22l7-7M22 16v6h-6M22 22l-7-7" />
        </Line>
      </button>
      <button aria-label="Take a snapshot" className="flex h-full w-[38px] items-center justify-center"><Camera size={22} strokeWidth={1} /></button>
      <button className="h-full w-20 bg-[#2196f3] text-[15px] text-white">Publish</button>
      <button aria-label="Start stream" className="flex h-full w-[39px] items-center justify-center rounded-br border-l border-white bg-[#2196f3] text-white">
        <CirclePlay size={21} strokeWidth={1} />
      </button>
    </header>
  );
}

/* ---------- chart ---------- */

function EventFlag({ x, y = 300, ring = "#f2b032", eu }) {
  return (
    <g>
      <circle cx={x} cy={y} r="11" fill="#fff" stroke={ring} strokeWidth="1.500" />
      {eu ? (
        <>
          <circle cx={x} cy={y} r="8" fill="#3b4fa8" />
          <circle cx={x} cy={y} r="4.500" fill="none" stroke="#f5d442" strokeWidth="1.500" strokeDasharray="1.500 2" />
        </>
      ) : (
        <>
          <circle cx={x} cy={y} r="8" fill="#fff" />
          <path d={`M${x} ${y - 6}h6M${x} ${y - 2}h8M${x - 8} ${y + 2}h16M${x - 5} ${y + 6}h10`} stroke="#e0505f" strokeWidth="2.500" />
          <path d={`M${x} ${y - 8}a8 8 0 0 0-8 8h8z`} fill="#4b83d8" />
        </>
      )}
    </g>
  );
}

function PriceTags({ side }) {
  const left = side === "left";
  const x = left ? 62 : 1815;
  const tx = left ? 105 : 1821;
  const anchor = left ? "end" : "start";
  return (
    <g fontSize="11" textAnchor={anchor}>
      <rect x={left ? 57 : 1815} y="176" width="55" height="55" fill="#d2e0f8" />
      {PRICE_LABELS.map(([y, t]) => (
        <g key={t}>
          <path d={left ? `M108 ${y + 0.5}h4` : `M1814 ${y + 0.5}h4`} stroke="#555" />
          <text x={tx} y={y + 4} fill="#555">{t}</text>
        </g>
      ))}
      <text x={tx} y="347" fill="#555" clipPath="url(#volumePane)">0</text>
      {[[139, "1.14235", "#e05353"], [168, "1.14160", "#5291cb"], [223, "1.14020", "#5291cb"]].map(([y, t, c]) => (
        <g key={t}>
          <rect x={x} y={y} width="49" height="17" fill={c} />
          <text x={tx} y={y + 12} fill="#fff">{t}</text>
        </g>
      ))}
      <rect x={x} y="185" width="49" height="2" fill="#000" />
      <rect x={left ? 62 : 1830} y="188" width="34" height="17" fill="#000" />
      <text x={left ? 66 : 1833} y="200" fill="#fff" textAnchor="start">01:29</text>
    </g>
  );
}

function PriceChart() {
  return (
    <svg viewBox="56 96 1814 415" className="block w-full rounded-t bg-white font-['Liberation_Sans',sans-serif]" role="img" aria-label="EURUSD chart">
      <defs>
        <clipPath id="volumePane"><rect x="56" y="315" width="1814" height="30" /></clipPath>
      </defs>

      <g stroke="#dde8ee">
        {GRID_X.map((x) => <path key={x} d={`M${x + 0.5} 96V486`} />)}
        {GRID_Y.map((y) => <path key={y} d={`M112 ${y + 0.5}H1814`} />)}
      </g>

      {/* price pane */}
      <path d="M119 242.500H1814" stroke="#999" strokeWidth="2" strokeDasharray="10 12" />
      <path d="M174.500 311v3M179.500 311v3M256.500 292v22M935.500 312v2" stroke="#000" />
      {CANDLES.map(([dir, x, top, bottom, high, low]) => (
        <g key={x}>
          <path d={`M${x + 0.5} ${high}V${low}`} stroke="#000" />
          <rect x={x - 2} y={top} width="5" height={bottom - top} fill={dir === "u" ? "#53b987" : "#eb4d5c"} />
        </g>
      ))}
      <path d="M113 147.500H1814" stroke="#e0525a" strokeWidth="3" strokeDasharray="3 7" />
      <path d="M113 178.500H1814" stroke="#000" strokeWidth="2" strokeDasharray="4 2" />
      <path d="M113 269.500 1814 147.500" stroke="#f0896a" strokeWidth="1.300" />
      <path d="M113 229.500 1814 240.500" stroke="#2a1a08" strokeWidth="4" />
      <path d="M113 230 1814 241" stroke="#b8822e" strokeWidth="2" />
      <path d="M113 159.500 1814 246.500" stroke="#f0f" strokeWidth="4" />
      <path d="M189 240 1041 96M188 231 1308 177M858 314 1433 178" stroke="#f00a0a" strokeWidth="3" fill="none" />
      <circle cx="188" cy="231" r="7" fill="#fff" stroke="#555" strokeWidth="2" />
      <circle cx="1308" cy="176" r="7" fill="#fff" stroke="#555" strokeWidth="2" />

      <EventFlag x={1154} eu />
      <EventFlag x={1247} ring="#f28b3c" />
      <EventFlag x={1278} />
      <EventFlag x={1288} ring="#f28b3c" />
      <EventFlag x={1382} />
      <EventFlag x={1757} />
      <EventFlag x={1745} ring="#eb4d5c" />
      <EventFlag x={1776} ring="#f28b3c" />
      <EventFlag x={1797} />
      <EventFlag x={1776} y={276} ring="#f0506e" eu />
      <g fontSize="10" fill="#222" stroke="#fff" strokeWidth="3" paintOrder="stroke">
        <text x="1161" y="297">2</text>
        <text x="1250" y="297">33</text>
        <text x="1295" y="297">2</text>
        <text x="1749" y="297">11</text>
        <text x="1780" y="297">12</text>
        <text x="1803" y="297">2</text>
      </g>
      <circle cx="1800" cy="114" r="7.500" fill="none" stroke="#f2935c" strokeWidth="1.500" />
      <path d="M1800 109.500v6M1800 117v2" stroke="#f2935c" strokeWidth="1.500" />

      {/* alerts pane */}
      <g clipPath="url(#volumePane)">
        {[[860, 318, 5], [866, 332, 4], [871, 325, 5], [877, 330, 3], [882, 329, 4], [886, 334, 3]].map(([x, y, w]) => (
          <rect key={x} x={x} y={y} width={w} height={345 - y} fill="#999" />
        ))}
        <path d="M852 339C870 334 890 332 910 334S955 338 975 339" fill="#c9bcf0" stroke="#a02a5a" />
        <path d="M113 339.500C200 337 300 341 400 339H1130" stroke="#1b1470" fill="none" />
        <rect x="113" y="340" width="1017" height="5" fill="#cf1a12" />
        {DOT_RUNS.flatMap(([from, to]) =>
          Array.from({ length: Math.floor((to - from) / 5) + 1 }, (_, i) => from + i * 5).map((x) => (
            <g key={x} fill="#f47a80">
              <circle cx={x} cy="322.500" r="2" />
              <path d={`M${x} 335l2 3-2 3-2-3z`} />
            </g>
          ))
        )}
        {D_BOXES.map(([x, w, c]) => <rect key={x} x={x} y="325" width={w} height="20" fill={c} />)}
        <g fontSize="12" fill="#111" textAnchor="middle">
          {D_MARKS.map((x) => (
            <g key={x} fill="#400">
              <text x={x} y="336">D</text>
              <text x={x + 1} y="348">T</text>
            </g>
          ))}
          <text x="118" y="323">C</text>
          <text x="268" y="323">C</text>
          <text x="273" y="323">C</text>
          <text x="278" y="323">C</text>
          <text x="304" y="323">C</text>
          <text x="876" y="323">C</text>
          <text x="881" y="323">C</text>
          <text x="457" y="336" fill="#1c8a1c">MA</text>
          <text x="203" y="321">LOWER</text>
          <text x="206" y="321">LOWER</text>
          <text x="202" y="333">BOUGHT</text>
          <text x="212" y="333">BOUGHT</text>
          <text x="1118" y="321">LOWER</text>
          <text x="1121" y="321">LOWER</text>
          <text x="1118" y="333">BOUGHT</text>
          <text x="1125" y="333">BOUGHT</text>
        </g>
        <path d="m196 334 14 0-7 7z" fill="#300" />
        <rect x="576" y="321" width="4" height="3" fill="#4aa8dc" />
      </g>

      {/* oscillator pane */}
      <rect x="116" y="390" width="1012" height="50" fill="#f0e4f0" />
      <path d="M116 390.500H1129M116 440H1129" stroke="#4fabdf" strokeWidth="4" />
      <path d="M116 477.500H1129" stroke="#8ccfee" strokeWidth="2" />
      <g transform="translate(110 310) scale(.3333)" fill="none" strokeLinejoin="round">
        <polyline points={PINK} stroke="#f03cf0" strokeWidth="5" opacity=".8" />
        <polyline points={SLOW_ORANGE} stroke="#f57a1a" strokeWidth="7" />
        <polyline points={SLOW_BLUE} stroke="#2f80e0" strokeWidth="8" />
        <polyline points={WAVE} stroke="#f2a04a" strokeWidth="3" transform="translate(12 0)" />
        <polyline points={WAVE} stroke="#4034f0" strokeWidth="10" opacity=".8" />
        {WAVE_TURNS.map((p) => <polyline key={p} points={p} stroke="#ff9a3c" strokeWidth="10" opacity=".85" />)}
        <polyline points={FAST} stroke="#2c8a3e" strokeWidth="10" opacity=".9" />
        {FAST_FALLS.map((p) => <polyline key={p} points={p} stroke="#d6283a" strokeWidth="10" opacity=".9" />)}
        <polyline points={OLIVE} stroke="#8f9138" strokeWidth="5" opacity=".8" />
      </g>
      <path d="M113 353.500H1814" stroke="#f01414" strokeWidth="2" strokeDasharray="4 2" />
      <path d="M113 387.500H1814" stroke="#f00a0a" strokeWidth="4" strokeDasharray="8 4" />
      <path d="M113 415.500H1814" stroke="#000" strokeWidth="2" strokeDasharray="4 2" />
      <g fontSize="12" textAnchor="middle">
        {[...SELLS.map((x) => [x, false]), ...DARK_SELLS.map((x) => [x, true])].map(([x, dark]) => (
          <g key={x}>
            <rect x={x - 6.5} y="361.500" width="13" height="49" fill={dark ? "#1b1424" : "#ff2c3c"} fillOpacity=".75" stroke={dark ? "#111" : "#d81c2c"} />
            <path d={`M${x - 2} 411h4l-2 2z`} fill={dark ? "#111" : "#d81c2c"} />
            {["S", "E", "L", "L"].map((c, i) => (
              <text key={i} x={x} y={371 + i * 12} fill={dark ? "#ccc" : "#6a0c18"}>{c}</text>
            ))}
          </g>
        ))}
        <rect x="113.500" y="422.500" width="11" height="49" fill="#3f6a42" fillOpacity=".9" stroke="#1c5a20" />
        {["B", "u", "y", "N"].map((c, i) => <text key={c} x="118" y={432 + i * 12} fill="#0a1a0a">{c}</text>)}
      </g>

      {/* frame and axes */}
      <path d="M56 314.500H1870M56 345.500H1870M112 486.500H1814M111.500 96V487M1814.500 96V487" stroke="#555" fill="none" />
      <PriceTags side="left" />
      <PriceTags side="right" />
      <rect x="188" y="487" width="1120" height="24" fill="#d2e0f8" />
      <g fontSize="11" textAnchor="middle" fill="#555">
        {TIME_LABELS.map(([x, t]) => (
          <g key={x}>
            <path d={`M${x + 0.5} 487v4`} stroke="#555" />
            <text x={x} y="504" fontWeight={t.length === 2 ? 700 : 400}>{t}</text>
          </g>
        ))}
        {[[138, "18 Dec '18 · 11:30"], [1258, "20 Dec '18 · 17:30"]].map(([x, t]) => (
          <g key={x}>
            <rect x={x} y="487" width="101" height="21" fill="#5291cb" />
            <path d={`M${x + 50.5} 487v4`} stroke="#fff" />
            <text x={x + 50} y="501" fill="#fff">{t}</text>
          </g>
        ))}
      </g>
    </svg>
  );
}

function LegendButtons({ count, on }) {
  const art = [
    <circle key="e" cx="7" cy="7" r="3.500" />,
    null,
    <path key="b" strokeWidth="1.300" d="M6 2.500H5Q4 2.500 4 4v1.500Q4 7 2.500 7 4 7 4 8.500V10q0 1.500 1 1.500h1M8 2.500h1q1 0 1 1.500v1.500Q10 7 11.500 7 10 7 10 8.500V10q0 1.500-1 1.500H8" />,
    <path key="p" d="M7 2.500v9M2.500 7h9" />,
    <path key="x" d="m3 3 8 8M11 3l-8 8" />,
  ].slice(5 - count);
  const labels = ["Hide", "Format", "Source", "Add", "Remove"].slice(5 - count);
  return (
    <span className="flex gap-[3px]">
      {art.map((a, i) => (
        <button key={i} aria-label={labels[i]} className={`h-3.5 w-3.5 text-white ${on && i === 0 ? "bg-[#2f95e8]" : "bg-[#d3d3d3]/90"}`}>
          {labels[i] === "Format" ? (
            <Gear size={10} className="m-0.5" />
          ) : (
            <svg width="14" height="14" viewBox="0 0 14 14" fill="none" stroke="currentColor" strokeWidth="2" aria-hidden="true">{a}</svg>
          )}
        </button>
      ))}
    </span>
  );
}

function ChartLegend() {
  const prices = [["O", "1.14203"], ["H", "1.14247"], ["L", "1.14150"], ["C", "1.14155"]];
  return (
    <>
      <div className="absolute left-[62px] top-2 flex items-center whitespace-nowrap text-[14px] leading-5">
        <button aria-label="Collapse legend" className="flex h-3 w-3 items-center justify-center rounded-sm border border-[#555]">
          <span className="h-px w-1.5 bg-[#555]" />
        </button>
        <svg width="12" height="12" viewBox="0 0 12 12" className="ml-2 mr-1.5" aria-hidden="true">
          <path d="M0 0h12L9 6l3 6H0z" fill="#f2555a" />
        </svg>
        <span className="text-[17px] text-[#4f4f4f]">Euro Fx/U.S. Dollar, 15, FXCM</span>
        <span className="mx-1 border-x-4 border-t-4 border-x-transparent border-t-[#bbb]" />
        <span className="ml-2.5 flex gap-2.5">
          {prices.map(([k, v]) => (
            <span key={k} className="flex gap-[3px]">
              <span className="text-[#4f4f4f]">{k}</span>
              <span className="text-[#d9475a]">{v}</span>
            </span>
          ))}
          <span className="text-[#d9475a]">−0.00048 (−0.04%)</span>
        </span>
      </div>
      <div className="absolute left-[62px] top-[33px] flex h-3.5 items-center gap-[5px] text-[12px] text-[#ccc]">
        SFv5
        <span className="mr-2.5 border-x-4 border-t-4 border-x-transparent border-t-[#bbb]" />
        <LegendButtons count={5} on />
      </div>
      <div className="absolute left-[62px] top-[227px] flex h-3.5 items-center text-[13px] text-[#555]/80">
        <span className="w-[103px]">SamLocker</span>
        <LegendButtons count={5} />
      </div>
      <div className="absolute left-[62px] top-[259px] flex h-3.5 items-center text-[13px] text-[#555]/80">
        <span className="w-[72px]">SrSv153</span>
        <LegendButtons count={4} />
      </div>
      <div className="absolute right-[141px] top-[41px] flex h-[21px] border border-[#e0525a] bg-white font-['Liberation_Serif',serif] text-[11px] font-bold leading-[19px]">
        <span className="w-8 text-center text-[#2a9a1e]">41.00</span>
        <span className="w-10 bg-[#e05353] text-center text-white">-50 000</span>
        <button aria-label="Reverse position" className="flex w-5 items-center justify-center border-r border-[#e0525a] text-[#d9475a]">
          <svg width="12" height="12" viewBox="0 0 12 12" fill="none" stroke="currentColor" aria-hidden="true">
            <path d="M3.500 11V1L1.500 3.500M3.500 1l2 2.500M8.500 1v10l-2-2.500M8.500 11l2-2.500" />
          </svg>
        </button>
        <button aria-label="Close position" className="flex w-[18px] items-center justify-center text-[#d9475a]">
          <svg width="10" height="10" viewBox="0 0 10 10" stroke="currentColor" aria-hidden="true"><path d="M0 0l10 10M10 0 0 10" /></svg>
        </button>
      </div>
    </>
  );
}

function RangeBar() {
  return (
    <div className="flex h-[35px] shrink-0 items-center border-t border-[#e1e5ea] bg-white text-[14px] text-[#222]">
      <div className="flex gap-3.5 pl-4">
        {RANGES.map((r) => <button key={r}>{r}</button>)}
      </div>
      <span className="mx-4 h-6 w-px bg-[#e1e5ea]" />
      <button>Go to...</button>
      <div className="flex-1" />
      <button>08:58:31 (UTC+1)</button>
      <span className="mx-4 h-6 w-px bg-[#e1e5ea]" />
      <div className="flex items-center gap-4 pr-[18px]">
        <button>%</button>
        <button>log</button>
        <button>auto</button>
        <button aria-label="Scale settings"><Gear size={14} /></button>
      </div>
    </div>
  );
}

/* ---------- account panel ---------- */

function PanelTabs() {
  return (
    <div className="flex h-[38px] shrink-0 items-stretch whitespace-nowrap text-[14px] text-[#222]" role="tablist">
      {PANEL_TABS.map((t) => (
        <button key={t.label} role="tab" className={`flex items-center gap-2 border-b border-r border-[#e1e5ea] ${t.width}`}>
          {t.label}
          {t.menu && <ChevronDown size={12} strokeWidth={1.500} />}
        </button>
      ))}
      <button role="tab" aria-selected="true" className="flex items-center gap-1 border-r border-[#e1e5ea] px-4 text-[#2f95e8]">
        Paper Trading
        <span className="h-1.5 w-1.5 rounded-full bg-[#4caf50]" />
      </button>
      <div className="flex flex-1 items-center justify-end gap-5 border-b border-[#e1e5ea] pr-[15px]">
        <button aria-label="Minimize" className="mt-3 h-px w-3.5 bg-[#222]" />
        <button aria-label="Maximize"><Maximize size={20} strokeWidth={1.200} /></button>
      </div>
    </div>
  );
}

function AccountPanel() {
  return (
    <section className="mt-1 flex min-h-0 flex-1 flex-col overflow-hidden rounded-t bg-white">
      <PanelTabs />
      <div className="flex min-h-0 flex-1">
        <div className="flex min-w-0 flex-1 flex-col">
          <div className="flex h-[31px] shrink-0 gap-8 pl-4 text-[15px] leading-[22px] text-[#555b61]">
            {ACCOUNT_TABS.map((t) => (
              <button
                key={t.label}
                className={`flex items-center gap-2 whitespace-nowrap border-b-4 pb-1 ${t.active ? "border-[#2f95e8] text-[#2f95e8]" : "border-transparent"}`}
              >
                {t.label}
                {t.count !== undefined && <span>{t.count}</span>}
              </button>
            ))}
            <div className="flex-1" />
            <button aria-label="Settings" className="flex w-[41px] items-center border-l border-[#ccd2d8] pb-1.5 pl-3">
              <Gear size={16} className="text-[#777]" />
            </button>
          </div>
          <dl className="flex h-[38px] shrink-0 items-center justify-end bg-[#e1ebf2] pr-5 text-[14px] text-[#7a8691]">
            <dt>Account Balance</dt>
            <dd className="ml-2.5 mr-5 text-[#4a4a4a]">253 780.01</dd>
            <dt>Equity</dt>
            <dd className="ml-2.5 mr-5 text-[#4a4a4a]">253 821.01</dd>
            <dt>Open Profit</dt>
            <dd className="ml-2.5 text-[#4a4a4a]">41.00</dd>
          </dl>
          <div className="flex min-h-0 flex-1 items-start overflow-hidden">
            <table className="flex-1 table-fixed border-collapse whitespace-nowrap text-left text-[13px] text-[#4a4a4a]">
              <colgroup>
                <col className="w-[113px]" />
                <col className="w-32" />
                <col className="w-[116px]" />
                <col className="w-[77px]" />
                <col />
                <col className="w-10" />
              </colgroup>
              <thead>
                <tr className="h-[51px] border-b border-[#e1e3e6] text-[#8c8c8c]">
                  <th className="pl-3 pt-2.5 font-normal">Time</th>
                  <th className="pl-3 pt-2.5 font-normal">Balance Before</th>
                  <th className="pl-3 pt-2.5 font-normal">Balance After</th>
                  <th className="pl-3 pt-2.5 font-normal">Profit</th>
                  <th className="pl-3 pt-2.5 font-normal">Action</th>
                  <th className="pt-2.5 font-normal">
                    <button aria-label="Columns" className="mx-auto flex flex-col gap-0.5">
                      <span className="h-[3px] w-[3px] rounded-full bg-[#6f8294]" />
                      <span className="h-[3px] w-[3px] rounded-full bg-[#6f8294]" />
                      <span className="h-[3px] w-[3px] rounded-full bg-[#6f8294]" />
                    </button>
                  </th>
                </tr>
              </thead>
              <tbody>
                {HISTORY.map(([time, before, after, profit, action], i) => (
                  <tr key={i} className="h-10 border-b border-[#e1e3e6]">
                    <td className="pl-3">{time}</td>
                    <td className="pl-3">{before}</td>
                    <td className="pl-3">{after}</td>
                    <td className="pl-3 text-[#45b48d]">{profit}</td>
                    <td className="pl-3" colSpan={2}>{action}</td>
                  </tr>
                ))}
              </tbody>
            </table>
            <div className="ml-0.5 mr-px mt-px h-[50px] w-1 rounded bg-[#9aaab7]" />
          </div>
        </div>
        <div className="flex w-[15px] flex-col items-center bg-[#f1f1f1] py-2">
          <span className="mb-3 border-x-4 border-b-4 border-x-transparent border-b-[#555]" />
          <span className="w-[11px] flex-1 bg-[#c1c1c1]" />
          <span className="mt-1 border-x-4 border-t-4 border-x-transparent border-t-[#999]" />
        </div>
      </div>
    </section>
  );
}

/* ---------- floating toolbars ---------- */

function Grip() {
  return (
    <svg width="9" height="14" viewBox="0 0 9 14" fill="#c4cbd1" aria-hidden="true">
      {[1, 6, 11].map((y) => [0, 5].map((x) => <rect key={`${x}-${y}`} x={x} y={y} width="2" height="2" />))}
    </svg>
  );
}

function Caret() {
  return <span className="border-x-3 border-t-4 border-x-transparent border-t-[#555]" />;
}

function DrawingToolbar() {
  const items = [
    { label: "Template", caret: true, art: <Line size={20} w={2}><path d="M3 3v18h18" /><path d="M3 3h18v18" strokeDasharray="3 2.500" /></Line> },
    { label: "Line color", art: <span className="flex flex-col items-center"><MdEdit size={22} /><span className="h-1 w-6 bg-[#e81212]" /></span> },
    { label: "Line width", caret: true, art: <span className="h-[3px] w-5 rounded bg-[#6f8294]" /> },
    { label: "Line style", caret: true, art: <span className="h-px w-5 bg-[#6f8294]" /> },
    { label: "Left end", caret: true, art: <svg width="20" height="6" fill="currentColor"><circle cx="2" cy="3" r="2" /><rect y="2.500" width="20" height="1" /></svg> },
    { label: "Right end", caret: true, art: <svg width="20" height="6" fill="currentColor"><circle cx="18" cy="3" r="2" /><rect y="2.500" width="20" height="1" /></svg> },
    { label: "Format", art: <Gear size={16} /> },
    { label: "Add alert", art: <AlarmPlus size={17} w={2} /> },
    { label: "Visual order", caret: true, art: <Line size={17} w={2}><path d="M1 4v19h18" /><path d="M5 1h18v18H5z" fill="currentColor" /></Line> },
    { label: "Clone", caret: true, art: <Line size={17} w={1.800}><path d="M2 17V1h14M6 5h15v18H6z" /></Line> },
    { label: "Lock", art: <MdLock size={18} /> },
    { label: "Hide", art: <MdVisibility size={17} /> },
    { label: "Remove", art: <MdDelete size={20} /> },
  ];
  return (
    <div className="absolute bottom-[86px] left-[184px] z-10 flex h-[39px] border border-[#dfe3e8] bg-white text-[#6f8294] shadow-md" role="toolbar">
      <span className="flex w-3.5 items-center justify-center"><Grip /></span>
      {items.map((it) => (
        <button key={it.label} aria-label={it.label} className="flex w-[39px] items-center justify-center gap-0.5 border-l border-[#e1e5ea]">
          {it.art}
          {it.caret && <Caret />}
        </button>
      ))}
    </div>
  );
}

function TradePanel() {
  return (
    <div className="absolute bottom-[15px] left-[795px] z-10 flex h-10 border border-[#dfe3e8] bg-white text-[14px] text-[#4a4a4a] shadow-md">
      <span className="flex w-3.5 items-center justify-center"><Grip /></span>
      <button className="w-[100px] bg-[#fdeef1] pl-2 text-left leading-4">
        <span className="block text-[13px] font-bold text-[#ee4f6c]">SELL</span>
        1.1415<span className="relative -top-1 text-[12px] text-[#ee4f6c]">1</span>
      </button>
      <span className="w-[43px] text-center leading-[38px] text-[#8c8c8c]">0.2</span>
      <button className="w-[100px] bg-[#ebf5fd] pl-2 text-left leading-4">
        <span className="block text-[13px] font-bold text-[#2f95e8]">BUY</span>
        1.1415<span className="relative -top-1 text-[12px] text-[#ee4f6c]">3</span>
      </button>
      <input aria-label="Quantity" defaultValue="50K" className="w-8 text-center" />
      <div className="flex w-5 flex-col border-l border-[#e1e5ea] text-[16px] leading-[18px]">
        <button aria-label="Increase" className="flex-1 border-b border-[#e1e5ea] font-bold">+</button>
        <button aria-label="Decrease" className="flex-1 font-bold">−</button>
      </div>
    </div>
  );
}

export default function App() {
  return (
    <div className="relative flex h-screen flex-col overflow-hidden bg-[#e4e8ec] font-['Liberation_Sans',Arial,sans-serif]">
      <BrowserBar />
      <Notification />
      <div className="flex min-h-0 flex-1">
        <LeftToolbar />
        <main className="flex min-w-0 flex-1 flex-col">
          <ChartHeader />
          <div className="relative shrink-0">
            <PriceChart />
            <ChartLegend />
          </div>
          <RangeBar />
          <AccountPanel />
        </main>
        <RightToolbar />
      </div>
      <DrawingToolbar />
      <TradePanel />
    </div>
  );
}
